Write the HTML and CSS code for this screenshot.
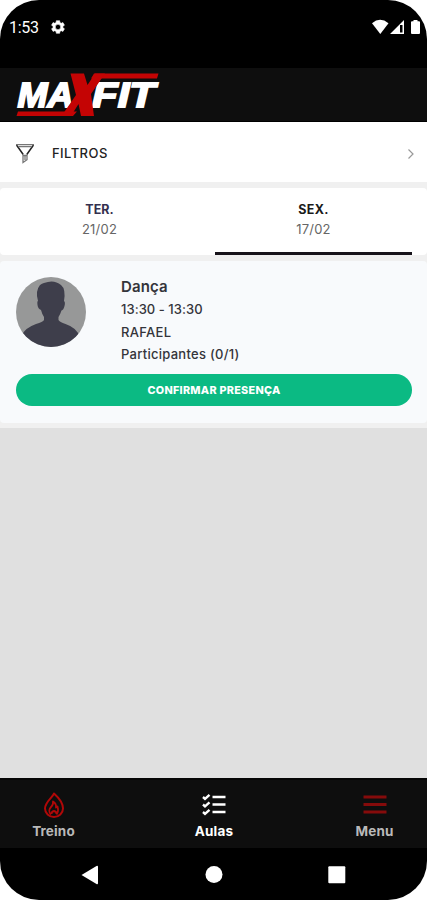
FILE: index.html
```html
<!DOCTYPE html>
<html lang="pt-BR">
<head>
<meta charset="utf-8">
<title>MaxFit</title>
<link rel="stylesheet" href="styles.css">
</head>
<body>
<div class="phone">
  <header class="status">
    <span class="clock">1:53</span>
    <svg class="gear" width="16" height="16" viewBox="0 0 24 24"><path fill="#fff" fill-rule="evenodd" d="M19.400 13a7.500 7.500 0 0 0 0-2l2.300-1.700-2.300-4-2.700 1.100a7.500 7.500 0 0 0-1.800-1L14.500 2.500h-5l-.4 2.900a7.500 7.500 0 0 0-1.800 1L4.600 5.300l-2.300 4L4.600 11a7.500 7.500 0 0 0 0 2l-2.300 1.700 2.300 4 2.700-1.100a7.500 7.500 0 0 0 1.800 1l.4 2.900h5l.4-2.900a7.500 7.500 0 0 0 1.800-1l2.700 1.100 2.300-4zM12 8a4 4 0 1 1 0 8 4 4 0 0 1 0-8z" stroke="#fff" stroke-width=".8"/></svg>
    <svg class="signals" width="50" height="16" viewBox="0 0 50 16">
      <path fill="#fff" d="M0 4.200Q8-2.600 16.500 4.200L8.300 15z"/>
      <path fill="#fff" d="M18 15L32 1v14zM28 6v7.500h2.500V6z" fill-rule="evenodd"/>
      <path fill="#fff" d="M39 3.200q0-1 1-1h1.500V1h4v1.200H47q1 0 1 1V14q0 1-1 1h-7q-1 0-1-1z"/>
    </svg>
  </header>
  <div class="brand">
    <svg width="144" height="46" viewBox="0 0 144 46">
      <g fill="#fff" stroke="#fff" stroke-width="1.800" stroke-linejoin="miter" class="logo-text">
        <text x="1.500" y="34.500" textLength="56" lengthAdjust="spacingAndGlyphs">MA</text>
        <text x="76" y="34.500" textLength="63" lengthAdjust="spacingAndGlyphs">FIT</text>
      </g>
      <path fill="#c40404" d="M78 1.500H142.500L141 6.500H75zM2 39.500H61L57 44H.5z"/>
      <path fill="#c40404" d="M54.500 1.500H68L71.500 13 79 1.500H89L75 22 78 44H65L62.500 32 55 44H45.500L60 23z"/>
    </svg>
  </div>
  <main>
    <section class="filters">
      <svg width="20" height="21" viewBox="0 0 20 21" fill="none"><path stroke="#222" stroke-width="1.500" d="M1.500 2L8.200 11.500M18.500 2L11.800 11.500"/><path stroke="#777" stroke-width="1.300" d="M1 1.600h18M3 3.600h14M8 11.500V19.500l4-2.800V11.500M8 12.500h4M10 12.500V17"/></svg>
      <span class="filters-label">FILTROS</span>
      <svg class="chevron" width="8" height="12" viewBox="0 0 8 12" fill="none" stroke="#999" stroke-width="1.200"><path d="M1.500 1.500L6 6 1.500 10.500"/></svg>
    </section>
    <nav class="days">
      <div class="day"><strong>TER.</strong><span>21/02</span></div>
      <div class="day active"><strong>SEX.</strong><span>17/02</span></div>
    </nav>
    <article class="lesson">
      <div class="info">
        <svg class="avatar" width="70" height="70" viewBox="0 0 70 70">
          <defs><clipPath id="c"><circle cx="35" cy="35" r="35"/></clipPath></defs>
          <g clip-path="url(#c)"><rect width="70" height="70" fill="#979898"/>
          <path fill="#3e3e4b" d="M22 24Q19 14 24 8q2-1.500 4-2 10-4 17 2 5 4 3 16 1.500 1 .5 5t-3 4.500Q44 38 42.500 40v3q1 2 7 4 12 4 14 13L65 70H4l2-12q3-7 14-11 7-2 8-4v-3q-2-3-3-7-3-1-3.500-5t.5-4z"/></g>
        </svg>
        <div class="details">
          <h2>Dança</h2>
          <p class="time">13:30 - 13:30</p>
          <p class="teacher">RAFAEL</p>
          <p class="members">Participantes (0/1)</p>
        </div>
      </div>
      <button class="confirm"><span>CONFIRMAR PRESENÇA</span></button>
    </article>
  </main>
  <nav class="tabs">
    <div class="tab">
      <svg width="22" height="26" viewBox="0 0 22 26" fill="none" stroke="#b00808" stroke-width="2" stroke-linejoin="round"><path d="M11 1.500C10 5 2 10 2 16.500a9 8.500 0 0 0 18 0C20 11 16 6 11 1.500z"/><path stroke-width="1.800" d="M8 22.500C5.500 20 6 17 8 15q2.500-2 2-5.500 3.500 2 3 6l1.500-1q1.500 5-1 8M8.500 22q0-2.500 2.500-3 2.500.5 2.500 3"/></svg>
      <span class="treino">Treino</span>
    </div>
    <div class="tab current">
      <svg width="24" height="22" viewBox="0 0 24 22" fill="none" stroke="#fff"><path stroke-width="2.600" d="M10.500 3H23.500M10.500 10.500H23.500M10.500 18H23.500"/><path stroke-width="2.400" d="M1 3l2 1.800 4.500-4M1 10.500l2 1.800 4.500-4M1 18l2 1.800 4.500-4"/></svg>
      <span class="aulas">Aulas</span>
    </div>
    <div class="tab">
      <svg width="24" height="22" viewBox="0 0 24 22" stroke="#850b0b" stroke-width="2.800"><path d="M.5 3h23M.5 10.500h23M.5 18h23"/></svg>
      <span class="menu">Menu</span>
    </div>
  </nav>
  <footer class="system">
    <svg width="18" height="20" viewBox="0 0 18 20"><path fill="#fff" d="M.5 10L15.500 1q1.500-.7 1.500 1v16q0 1.700-1.500 1z"/></svg>
    <svg width="18" height="20" viewBox="0 0 18 20"><circle cx="9" cy="9.500" r="8.500" fill="#fff"/></svg>
    <svg width="18" height="20" viewBox="0 0 18 20"><rect x=".3" y="1.200" width="17" height="17" rx="1" fill="#fff"/></svg>
  </footer>
</div>
</body>
</html>
```
FILE: styles.css
```css
* { box-sizing: border-box; margin: 0; padding: 0; }
html { background: #fff; }
body { width: 427px; height: 900px; overflow: hidden; font-family: Inter, Roboto, sans-serif; }
svg { display: block; flex: none; }
.phone { height: 900px; display: flex; flex-direction: column; background: #000; border-radius: 39px; overflow: hidden; }
.status { height: 68px; display: flex; padding: 19px 5px 0 9px; color: #fff; }
.clock { font: 400 16px/18px Roboto, sans-serif; letter-spacing: -.25px; width: 41px; }
.signals { margin-left: auto; }
.brand { height: 54px; background: #0e0e0e; padding: 4px 16px 0; border-bottom: 1px solid #000; }
.logo-text { font: italic 700 34.500px "Liberation Sans", sans-serif; }
main { flex: 1; background: linear-gradient(#f0f0f0 306px, #e0e0e0 306px); }
.filters { height: 60px; background: #fff; display: flex; align-items: center; padding: 2px 12px 0 15px; }
.filters-label { margin: 0 0 0 17px; font-size: 13px; font-weight: 500; letter-spacing: .45px; color: #222; }
.chevron { margin: 1px 0 0 auto; }
.days { height: 67px; display: grid; grid-template-columns: 197px 197px; column-gap: 17px; margin: 6px 0; border-radius: 4px; padding: 0 15px 0 1px; background: #fff; }
.day { display: flex; flex-direction: column; align-items: center; padding-top: 12px; line-height: 19px; font-size: 13px; color: #666; }
.day span { letter-spacing: .2px; }
.day strong { font-size: 12.500px; line-height: 20px; font-weight: 700; color: #34304f; }
.day.active { border-bottom: 3px solid #17131a; }
.day.active strong { letter-spacing: .3px; color: #1a1a1a; }
.lesson { height: 162px; background: #f8fafc; padding: 16px 15px 0 16px; border-radius: 4px; }
.info { height: 97px; display: flex; }
.details { margin-left: 35px; color: #34343a; font-size: 13px; }
.details h2 { font-size: 15px; line-height: 19px; font-weight: 600; letter-spacing: .15px; margin-bottom: 2px; }
.details p { line-height: 22.500px; font-weight: 500; }
.details .time { letter-spacing: .05px; }
.details .teacher { letter-spacing: .3px; }
.details .members { letter-spacing: .27px; }
.confirm { display: flex; align-items: center; justify-content: center; width: 100%; height: 32px; border: 0; border-radius: 16px; background: #0bba83; color: #fff; font: 800 10.800px Inter, sans-serif; letter-spacing: .28px; }
.tabs { height: 70px; background: #0e0e0e; border-top: 2px solid #050505; display: flex; justify-content: space-between; padding: 12px 11px 0 12px; }
.tab { width: 83px; display: flex; flex-direction: column; align-items: center; color: #b9b9b9; font-size: 13.500px; font-weight: 700; line-height: 18px; }
.tab svg { height: 26px; margin-bottom: 4px; }
.tab.current { color: #fff; }
.treino { letter-spacing: .15px; }
.aulas { letter-spacing: .2px; }
.menu { letter-spacing: .1px; }
.system { height: 52px; display: flex; justify-content: space-between; padding: 17px 81px 0; }
```
